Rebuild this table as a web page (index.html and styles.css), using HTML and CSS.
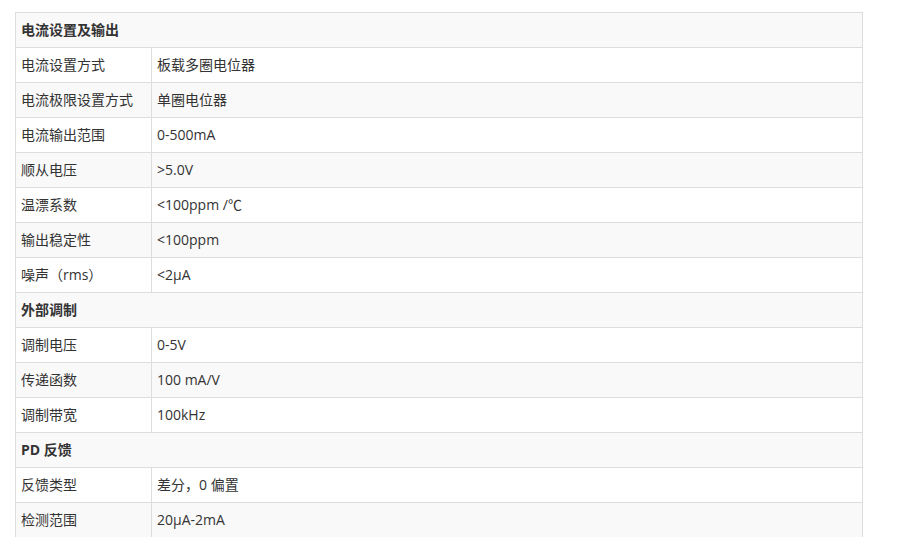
FILE: index.html
```html
<!DOCTYPE html>
<html lang="zh">
<head>
<meta charset="utf-8">
<link rel="stylesheet" href="styles.css">
</head>
<body>
<div class="wrap">
<table class="spec">
<tbody>
<tr class="sec"><td colspan="2">电流设置及输出</td></tr>
<tr><td class="k">电流设置方式</td><td>板载多圈电位器</td></tr>
<tr><td class="k">电流极限设置方式</td><td>单圈电位器</td></tr>
<tr><td class="k">电流输出范围</td><td>0-500mA</td></tr>
<tr><td class="k">顺从电压</td><td>&gt;5.0V</td></tr>
<tr><td class="k">温漂系数</td><td>&lt;100ppm /℃</td></tr>
<tr><td class="k">输出稳定性</td><td>&lt;100ppm</td></tr>
<tr><td class="k">噪声（rms）</td><td>&lt;2μA</td></tr>
<tr class="sec"><td colspan="2">外部调制</td></tr>
<tr><td class="k">调制电压</td><td>0-5V</td></tr>
<tr><td class="k">传递函数</td><td>100 mA/V</td></tr>
<tr><td class="k">调制带宽</td><td>100kHz</td></tr>
<tr class="sec"><td colspan="2">PD 反馈</td></tr>
<tr><td class="k">反馈类型</td><td>差分，0 偏置</td></tr>
<tr><td class="k">检测范围</td><td>20μA-2mA</td></tr>
</tbody>
</table>
</div>
</body>
</html>
```
FILE: styles.css
```css
html, body {
  margin: 0;
  padding: 0;
  background: #fff;
}
.wrap {
  padding: 12px 0 0 15px;
}
.spec {
  border-collapse: collapse;
  width: 848px;
  font-family: "Open Sans", "Noto Sans CJK SC", sans-serif;
  font-size: 14px;
  color: #333;
}
.spec td {
  border: 1px solid #ddd;
  height: 35px;
  padding: 0 5px;
  box-sizing: border-box;
  line-height: 20px;
  vertical-align: middle;
}
.spec tr:nth-child(odd) {
  background: #f9f9f9;
}
.spec td.k {
  width: 136px;
}
.spec tr.sec td {
  font-weight: bold;
}
```
